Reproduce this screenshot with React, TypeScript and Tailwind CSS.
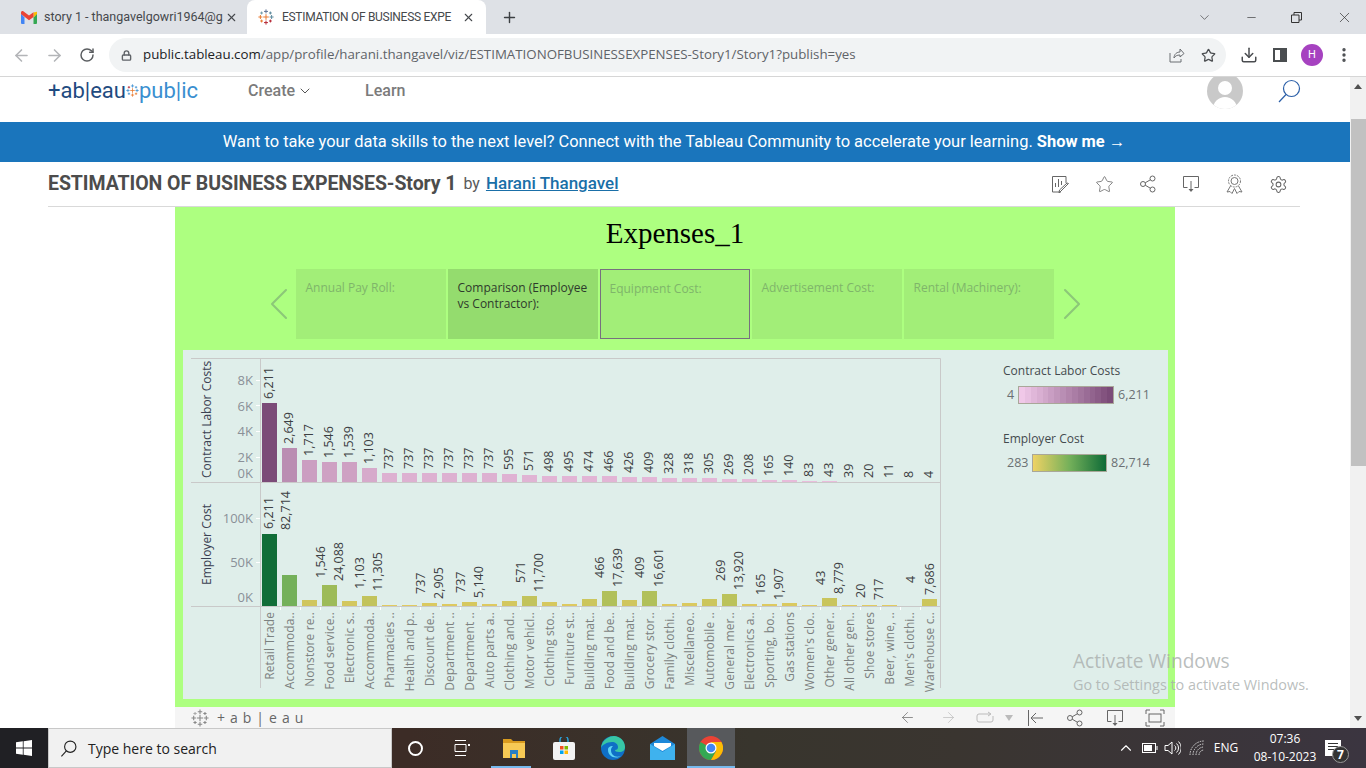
import React from 'react';
import { ArrowLeft, ArrowRight, ChevronDown, ChevronLeft, ChevronRight, ChevronUp, Download, EllipsisVertical, Lock, Minus, Plus, RotateCw, Star, X } from 'lucide-react';

const CATEGORIES = [
  'Retail Trade', 'Accommoda..', 'Nonstore re..', 'Food service..', 'Electronic s..', 'Accommoda..', 'Pharmacies ..', 'Health and p..',
  'Discount de..', 'Department ..', 'Department ..', 'Auto parts a..', 'Clothing and..', 'Motor vehicl..', 'Clothing sto..', 'Furniture st..',
  'Building mat..', 'Food and be..', 'Building mat..', 'Grocery stor..', 'Family clothi..', 'Miscellaneo..', 'Automobile ..', 'General mer..',
  'Electronics a..', 'Sporting, bo..', 'Gas stations', "Women's clo..", 'Other gener..', 'All other gen..', 'Shoe stores', 'Beer, wine, ..',
  "Men's clothi..", 'Warehouse c..',
];

const LABOR = ['6,211', '2,649', '1,717', '1,546', '1,539', '1,103', '737', '737', '737', '737', '737', '737', '595', '571', '498', '495', '474', '466', '426', '409', '328', '318', '305', '269', '208', '165', '140', '83', '43', '39', '20', '11', '8', '4'];
const LABOR_H = [79, 34, 22, 20, 20, 14, 9, 9, 9, 9, 9, 9, 8, 7, 6, 6, 6, 6, 5, 5, 4, 4, 4, 3, 3, 2, 2, 1, 1, 0, 0, 0, 0, 0];
const EMP_H = [72, 31, 6, 21, 5, 10, 1, 1, 3, 2, 4, 2, 5, 10, 4, 2, 7, 15, 6, 15, 2, 3, 7, 12, 2, 2, 3, 1, 8, 1, 1, 1, 0, 7];

const EMP_LABELS: [string, number, number][] = [
  ['6,211', 269, 529], ['82,714', 286, 530], ['1,546', 321, 578], ['24,088', 339, 581], ['1,103', 360, 589], ['11,305', 378, 591],
  ['737', 421, 594], ['2,905', 439, 599], ['737', 461, 593], ['5,140', 479, 598], ['571', 521, 583], ['11,700', 539, 592],
  ['466', 600, 578], ['17,639', 618, 587], ['409', 640, 578], ['16,601', 659, 587], ['269', 721, 581], ['13,920', 739, 590],
  ['165', 761, 595], ['1,907', 779, 600], ['43', 821, 585], ['8,779', 839, 594], ['20', 861, 598], ['717', 879, 600],
  ['4', 911, 583], ['7,686', 930, 595],
];

const STORY = [
  { label: 'Annual Pay Roll:' },
  { label: 'Comparison (Employee vs Contractor):', active: true },
  { label: 'Equipment Cost:', focused: true },
  { label: 'Advertisement Cost:' },
  { label: 'Rental (Machinery):' },
];

type RGB = [number, number, number];

const lerp = (a: RGB, b: RGB, t: number) => {
  const c = a.map((v, i) => Math.round(v + (b[i] - v) * t));
  return `rgb(${c[0]},${c[1]},${c[2]})`;
};

const pink = (h: number) => lerp([234, 190, 221], [123, 75, 120], h / 79);

const EMP_STOPS: [number, RGB][] = [[0, [228, 203, 96]], [21, [157, 187, 88]], [31, [116, 176, 90]], [72, [17, 109, 56]]];

const green = (h: number) => {
  for (let i = 1; i < EMP_STOPS.length; i++) {
    const [h0, c0] = EMP_STOPS[i - 1];
    const [h1, c1] = EMP_STOPS[i];
    if (h <= h1) return lerp(c0, c1, (h - h0) / (h1 - h0));
  }
  return 'rgb(17,109,56)';
};

const PINK_STEPS = Array.from({ length: 16 }, (_, i) => lerp([240, 200, 232], [123, 75, 120], i / 15));

const TableauMark = ({ size = 16, colors }: { size?: number; colors: string[] }) => {
  const cross = (x: number, y: number, r: number, c: string, k: string) => (
    <path key={k} d={`M${x - r} ${y}H${x + r}M${x} ${y - r}V${y + r}`} stroke={c} strokeWidth={1.2} fill="none" />
  );
  return (
    <svg width={size} height={size} viewBox="0 0 20 20">
      {cross(10, 10, 3.5, colors[0], 'c')}
      {cross(10, 3, 2.5, colors[1], 't')}
      {cross(10, 17, 2.5, colors[2], 'b')}
      {cross(3, 10, 2.5, colors[3], 'l')}
      {cross(17, 10, 2.5, colors[4], 'r')}
      {cross(4.5, 5, 1.8, colors[5], 'tl')}
      {cross(15.5, 5, 1.8, colors[4], 'tr')}
      {cross(4.5, 15, 1.8, colors[3], 'bl')}
      {cross(15.5, 15, 1.8, colors[2], 'br')}
    </svg>
  );
};

// magnifier with the lens up and to the right, as Windows and Tableau draw it
const Magnifier = ({ size, color, width }: { size: number; color: string; width: number }) => (
  <svg width={size} height={size} viewBox="0 0 24 24" fill="none" stroke={color} strokeWidth={width}>
    <circle cx="14.500" cy="9.500" r="8" />
    <path d="M9 15.500 2 23" />
  </svg>
);

const Gmail = () => (
  <svg width="16" height="13" viewBox="0 0 16 13">
    <path d="M0 2.500V12a1 1 0 0 0 1 1h2.500V6.500z" fill="#4285f4" />
    <path d="M16 2.500V12a1 1 0 0 1-1 1h-2.500V6.500z" fill="#34a853" />
    <path d="M12.500 1.500 16 0.800V3l-3.500 3.500z" fill="#fbbc04" />
    <path d="M0 3V1.500C0 .3 1.300-.4 2.300.3L8 4.600l4.500-3.300V6L8 9.300 0 3z" fill="#ea4335" />
  </svg>
);

const ChromeIcon = () => (
  <svg width="24" height="24" viewBox="0 0 24 24">
    <circle cx="12" cy="12" r="12" fill="#ea4335" />
    <path d="M12 12 1.600 6A12 12 0 0 0 12 24l5.200-9z" fill="#34a853" />
    <path d="M12 6h10.400A12 12 0 0 1 12 24l5.200-9z" fill="#fbbc04" />
    <circle cx="12" cy="12" r="5.500" fill="#fff" />
    <circle cx="12" cy="12" r="4.300" fill="#4285f4" />
  </svg>
);

const WinLogo = () => (
  <svg width="16" height="16" viewBox="0 0 16 16" fill="#fff">
    <path d="M0 2.300 6.800 1.300V7.600H0zM7.600 1.200 16 0V7.600H7.600zM0 8.400H6.800V14.700L0 13.700zM7.600 8.400H16V16L7.600 14.800z" />
  </svg>
);

const Share3 = ({ size = 18, color = '#666' }: { size?: number; color?: string }) => (
  <svg width={size} height={size} viewBox="0 0 18 18" fill="none" stroke={color} strokeWidth="1">
    <circle cx="4" cy="9" r="2.500" />
    <circle cx="13.500" cy="3.500" r="2.500" />
    <circle cx="13.500" cy="14.500" r="2.500" />
    <path d="M6.200 7.800 11.300 4.800M6.200 10.200l5.100 3" />
  </svg>
);

const DownloadBox = ({ color = '#666' }: { color?: string }) => (
  <svg width="18" height="18" viewBox="0 0 18 18" fill="none" stroke={color} strokeWidth="1">
    <path d="M5.500 12.500H1.500V1.500H16.500V12.500H12.500M9 6V16" />
    <path d="M6.500 14H11.500L9 17z" fill={color} stroke="none" />
  </svg>
);

const Chart = () => (
  <svg width="775" height="349" viewBox="183 350 775 349" className="block shrink-0 font-['Open_Sans',sans-serif]">
    <path d="M191 358.500H940.500V688M191 482.500H940M191 606.500H940M260.500 358V688" fill="none" stroke="#c9c9c9" />

    {/* axis titles */}
    <text transform="translate(211,478) rotate(-90)" fontSize="12" fill="#3b4152">Contract Labor Costs</text>
    <text transform="translate(211,585) rotate(-90)" fontSize="12" fill="#3b4152">Employer Cost</text>

    {/* axis ticks */}
    {[['8K', 380], ['6K', 406], ['4K', 431], ['2K', 457], ['0K', 473], ['100K', 518], ['50K', 562], ['0K', 597]].map(([t, y]) => (
      <text key={`${t}${y}`} x="253" y={Number(y) + 5} textAnchor="end" fontSize="13" fill="#8a9098">{t}</text>
    ))}
    {[380, 405, 431, 457, 518, 562].map(y => <path key={y} d={`M256 ${y + 0.5}H260`} stroke="#fff" />)}

    {CATEGORIES.map((name, i) => {
      const cx = 270 + i * 20;
      const lh = LABOR_H[i];
      const eh = EMP_H[i];
      return (
        <g key={i}>
          <rect x={cx - 8} y={482 - lh} width="15" height={lh} fill={pink(lh)} />
          <rect x={cx - 8} y={606 - eh} width="15" height={eh} fill={green(eh)} />
          <text transform={`translate(${cx + 3},${478 - lh}) rotate(-90)`} fontSize="12.5" fill="#3d4043">{LABOR[i]}</text>
          <text transform={`translate(${cx + 4},612) rotate(-90)`} textAnchor="end" fontSize="12" letterSpacing=".1" fill="#7c8180">{name}</text>
          {i > 0 && <path d={`M${cx - 10 + 0.5} 607V610`} stroke="#fff" />}
        </g>
      );
    })}

    {EMP_LABELS.map(([t, x, y], i) => (
      <text key={i} transform={`translate(${x + 4},${y}) rotate(-90)`} fontSize="12.5" fill="#3d4043">{t}</text>
    ))}
  </svg>
);

const Legend = () => (
  <div className="ml-[45px] pt-[13px] text-[12px] font-['Open_Sans',sans-serif] text-[#555b5f]">
    <div className="text-[#444a4e] leading-[15px]">Contract Labor Costs</div>
    <div className="mt-[8px] flex h-[18px] items-center text-[12.500px] text-[#6b7073]">
      <span className="w-[15px] pl-[4px]">4</span>
      <div className="flex h-[18px] w-[96px] border border-[#a9a799]">
        {PINK_STEPS.map(c => <div key={c} className="flex-1" style={{ backgroundColor: c }} />)}
      </div>
      <span className="ml-[4px]">6,211</span>
    </div>
    <div className="mt-[27px] text-[#444a4e] leading-[15px]">Employer Cost</div>
    <div className="mt-[8px] flex h-[18px] items-center text-[12.500px] text-[#6b7073]">
      <span className="w-[29px] pl-[4px]">283</span>
      <div className="h-[18px] w-[75px] border border-[#a9a799] bg-[linear-gradient(90deg,#eed264,#74b05a_50%,#0e6b37)]" />
      <span className="ml-[4px]">82,714</span>
    </div>
  </div>
);

const Viz = () => (
  <div className="mx-auto w-[1000px] shrink-0">
    <div className="flex h-[500px] flex-col bg-[#adff80]">
      <div className="pt-[8px] text-center font-['Liberation_Serif',serif] text-[29px] leading-[36px] text-black">Expenses_1</div>
      <div className="mt-[18px] flex h-[70px] items-center justify-center gap-[2px]">
        <ChevronLeft size={56} strokeWidth={0.9} className="mr-[-13px] text-[#8cc878]" />
        {STORY.map(s => (
          <div
            key={s.label}
            className={`h-[70px] w-[150px] px-[10px] pt-[11px] font-['Open_Sans',sans-serif] text-[12px] leading-[16px] ${
              s.active ? 'bg-[#94dc6e] text-[#2e3a2c]' : 'bg-[#a2ee78] text-[#7fb56a]'
            } ${s.focused ? 'border border-[#77707f] pt-[10px] pl-[9px]' : ''}`}
          >
            {s.label}
          </div>
        ))}
        <ChevronRight size={56} strokeWidth={0.9} className="ml-[-12px] text-[#8cc878]" />
      </div>
      <div className="mx-[8px] mb-[8px] mr-[7px] mt-[11px] flex h-[349px] bg-[#dfeeea]">
        <Chart />
        <Legend />
      </div>
    </div>
    <div className="flex h-[21px] items-center bg-[#f5f5f5] pl-[16px] text-[#666]">
      <TableauMark size={18} colors={['#888', '#888', '#888', '#888', '#888', '#aaa']} />
      <span className="ml-[8px] font-['Open_Sans',sans-serif] text-[14px] tracking-[5px]">+ab|eau</span>
      <div className="ml-auto flex items-center pr-[10px]">
        <ArrowLeft size={17} strokeWidth={1} className="mr-[24px]" />
        <ArrowRight size={17} strokeWidth={1} className="mr-[19px] text-[#bbb]" />
        <svg width="20" height="14" viewBox="0 0 20 14" fill="none" stroke="#bbb" className="mr-[9px]">
          <path d="M14 3H3a2 2 0 0 0-2 2v4a2 2 0 0 0 2 2h12a2 2 0 0 0 2-2V5M12 1l3 2-3 2" />
        </svg>
        <svg width="8" height="6" viewBox="0 0 8 6" fill="#bbb" className="mr-[14px]"><path d="M0 0h8L4 6z" /></svg>
        <svg width="17" height="18" viewBox="0 0 17 18" fill="none" stroke="#666" className="mr-[22px]"><path d="M1.500 1V17M16 9H4M9 4 4 9l5 5" /></svg>
        <div className="mr-[22px]"><Share3 /></div>
        <div className="mr-[21px]"><DownloadBox /></div>
        <svg width="20" height="18" viewBox="0 0 20 18" fill="none" stroke="#666">
          <path d="M1 5V1H5M15 1H19V5M19 13V17H15M5 17H1V13" />
          <rect x="4" y="5" width="12" height="8" />
        </svg>
      </div>
    </div>
  </div>
);

const Taskbar = () => (
  <div className="flex h-[40px] shrink-0 items-center bg-[linear-gradient(90deg,#3c2c26_30%,#38352d_55%,#3a3530_70%,#3b3540)] text-white">
    <div className="flex h-full w-[48px] items-center justify-center bg-[#202024]"><WinLogo /></div>
    <div className="flex h-full w-[344px] items-center border border-[#c8c8c8] bg-[#f1f1f1] pl-[11px] text-[#222]">
      <Magnifier size={17} color="#222" width={1.6} />
      <span className="ml-[11px] font-['Open_Sans',sans-serif] text-[14px]">Type here to search</span>
    </div>
    <div className="ml-[16px] h-[15px] w-[15px] rounded-full border-[2.500px] border-white" />
    <svg width="16" height="16" viewBox="0 0 16 16" fill="none" stroke="#fff" className="ml-[31px]">
      <path d="M1 .5H12M1 15.500H12M1 4.500H12V11.500H1z" /><rect x="14" y="4" width="2" height="2" fill="#fff" stroke="none" />
    </svg>
    <div className="relative ml-[20px] flex h-full w-[48px] items-center justify-center">
      <svg width="22" height="20" viewBox="0 0 22 20">
        <path d="M0 1h8l2 2h12v3H0z" fill="#d99b1e" /><path d="M0 5h22v15H0z" fill="#f7ca55" /><path d="M7 12h8v8h-2v-4H9v4H7z" fill="#2a7fc4" />
      </svg>
      <div className="absolute bottom-0 left-[1px] h-[2px] w-[40px] bg-[#76b9ed]" />
    </div>
    <div className="ml-[2px] flex h-full w-[48px] items-center justify-center">
      <svg width="22" height="23" viewBox="0 0 22 23">
        <path d="M7 6V3a4 4 0 0 1 8 0v3" fill="none" stroke="#2aa0d8" strokeWidth="1.500" />
        <rect y="5" width="22" height="18" rx="2" fill="#f3f3f3" />
        <path d="M7 9h3.500v3.500H7z" fill="#f25022" /><path d="M11.500 9H15v3.500h-3.500z" fill="#7fba00" /><path d="M7 13.500h3.500V17H7z" fill="#00a4ef" /><path d="M11.500 13.500H15V17h-3.500z" fill="#ffb900" />
      </svg>
    </div>
    <div className="ml-[1px] flex h-full w-[48px] items-center justify-center">
      <svg width="24" height="24" viewBox="0 0 24 24">
        <circle cx="12" cy="12" r="12" fill="#0f6fc6" />
        <path d="M0 12C1 3 9 0 13 0c6 0 11 5 11 11 0 3-2 5-6 5-3 0-4-1-4-2 2 0 3-1 3-3 0-3-3-5-6-5-5 0-10 3-11 6z" fill="#37c6a5" />
        <path d="M7 14c0 5 5 9 11 7l2-1c-6 2-10-1-10-6 0-2 1-3 2-4-3 0-5 1-5 4z" fill="#5fd4f4" />
      </svg>
    </div>
    <div className="ml-[1px] flex h-full w-[48px] items-center justify-center">
      <svg width="25" height="24" viewBox="0 0 25 24">
        <path d="M12.500 0 25 8v16H0V8z" fill="#1e88d8" /><path d="M0 8l12.500 8L25 8v16H0z" fill="#3fb2ee" /><path d="M4 7h17v3l-8.500 5L4 10z" fill="#fff" />
      </svg>
    </div>
    <div className="relative ml-[1px] flex h-full w-[48px] items-center justify-center bg-[#57595c]">
      <ChromeIcon />
      <div className="absolute bottom-0 left-0 h-[2px] w-full bg-[#76b9ed]" />
    </div>
    <div className="ml-auto flex h-full items-center text-[12px] font-['Open_Sans',sans-serif]">
      <ChevronUp size={18} strokeWidth={1.5} />
      <svg width="16" height="10" viewBox="0 0 16 10" fill="none" stroke="#fff" className="ml-[7px]"><rect x=".5" y=".5" width="13" height="9" /><rect x="2" y="2" width="8" height="6" fill="#fff" stroke="none" /><path d="M15 3v4" /></svg>
      <svg width="17" height="16" viewBox="0 0 17 16" fill="none" stroke="#fff" className="ml-[6px]"><path d="M1 5.500H4L8 2V14L4 10.500H1zM10.500 5.500a3 3 0 0 1 0 5M12.500 3.500a6 6 0 0 1 0 9M14.500 1.500a9 9 0 0 1 0 13" /></svg>
      <svg width="16" height="16" viewBox="0 0 16 16" fill="none" stroke="#ddd" className="ml-[8px]"><path d="M1 15A14 14 0 0 1 15 1M4 15A11 11 0 0 1 15 4M7 15a8 8 0 0 1 8-8M10 15a5 5 0 0 1 5-5" strokeDasharray="1.500 1" /></svg>
      <span className="ml-[2px] w-[38px] text-center">ENG</span>
      <div className="ml-[8px] w-[64px] text-center leading-[18px]"><div>07:36</div><div>08-10-2023</div></div>
      <div className="relative ml-[8px] mr-[25px] h-[16px] w-[16px] bg-white">
        <div className="mx-[3px] mt-[3px] h-[1px] bg-[#333]" />
        <div className="mx-[3px] mt-[2px] h-[1px] bg-[#333]" />
        <div className="mx-[3px] mt-[2px] h-[1px] bg-[#333]" />
        <div className="absolute left-[7px] top-[6px] flex h-[17px] w-[17px] items-center justify-center rounded-full border border-[#999] bg-[#333] font-bold">7</div>
      </div>
    </div>
  </div>
);

const App: React.FC = () => {
  return (
    <div className="relative flex h-[768px] w-[1366px] flex-col overflow-hidden bg-white font-['Roboto',sans-serif]">
      {/* Tabs */}
      <div className="flex h-[34px] shrink-0 items-end bg-[#dee1e6] text-[12.500px] text-[#45484c]">
        <div className="flex h-[34px] w-[247px] items-center pl-[21px]">
          <Gmail />
          <span className="ml-[7px] w-[172px] whitespace-nowrap">story 1 - thangavelgowri1964@g</span>
          <X size={13} strokeWidth={2} className="ml-[9px]" />
        </div>
        <div className="flex h-[34px] w-[239px] items-center rounded-t-[8px] bg-white pl-[11px]">
          <TableauMark size={16} colors={['#e8762b', '#5b6f91', '#b3202e', '#e8762b', '#59879b', '#7099a6']} />
          <span className="ml-[8px] w-[170px] whitespace-nowrap text-[12px] tracking-[-.3px]">ESTIMATION OF BUSINESS EXPE</span>
          <X size={13} strokeWidth={2} className="ml-[10px]" />
        </div>
        <div className="flex h-[34px] items-center pl-[15px] text-[#3c4043]"><Plus size={17} strokeWidth={2} /></div>
        <div className="ml-auto flex h-[34px] items-center text-[#333]">
          <ChevronDown size={15} strokeWidth={1} className="mr-[33px]" />
          <Minus size={13} strokeWidth={1.2} className="mr-[33px]" />
          <svg width="11" height="11" viewBox="0 0 11 11" fill="none" stroke="#333" className="mr-[34px]"><path d="M.5 3h7.500v7.500H.500zM3 3V.5h7.500V8H8" /></svg>
          <X size={17} strokeWidth={1} className="mr-[13px]" />
        </div>
      </div>

      {/* Address bar */}
      <div className="flex h-[43px] shrink-0 items-center border-b border-[#d6d6d6] bg-white">
        <ArrowLeft size={19} strokeWidth={2} className="ml-[12px] text-[#b3b5b8]" />
        <ArrowRight size={19} strokeWidth={2} className="ml-[14px] text-[#b3b5b8]" />
        <RotateCw size={16} strokeWidth={2.200} className="ml-[15px] text-[#5a5d60]" />
        <div className="ml-[14px] flex h-[34px] w-[1117px] items-center rounded-full bg-[#f1f3f4] pl-[12px] font-['Open_Sans',sans-serif] text-[13.300px]">
          <Lock size={11} strokeWidth={3} className="text-[#5f6368]" />
          <span className="ml-[11px] text-[#202124]">public.tableau.com</span>
          <span className="text-[#5f6368]">/app/profile/harani.thangavel/viz/ESTIMATIONOFBUSINESSEXPENSES-Story1/Story1?publish=yes</span>
          <div className="ml-auto flex items-center pr-[10px] text-[#5f6368]">
            <svg width="16" height="16" viewBox="0 0 16 16" fill="none" stroke="#6b6e72" className="mr-[16px]"><path d="M1 6v9h11v-3M5 11c0-4 3-6 6-6V2l4 4.500L11 10V8c-3 0-5 1-6 3z" /></svg>
            <Star size={15} strokeWidth={2} className="text-[#4a4d50]" />
          </div>
        </div>
        <Download size={18} strokeWidth={2} className="ml-[14px] text-[#4a4d50]" />
        <div className="ml-[15px] flex h-[14px] w-[14px] border-2 border-[#4a4d50]"><div className="ml-auto w-[5px] bg-[#4a4d50]" /></div>
        <div className="ml-[14px] flex h-[22px] w-[22px] items-center justify-center rounded-full bg-[#a642c0] text-[11px] text-white">H</div>
        <EllipsisVertical size={18} strokeWidth={2.500} className="ml-[12px] text-[#4a4d50]" />
      </div>

      {/* Page */}
      <div className="flex min-h-0 flex-1">
        <div className="flex w-[1350px] flex-col overflow-hidden">
          <div className="flex h-[45px] shrink-0 items-center pb-[18px] pl-[48px]">
            <span className="flex w-[200px] items-center text-[22px] font-normal leading-none text-[#1f4b80]">
              +ab|eau
              <TableauMark size={13} colors={['#e8762b', '#3a8fd0', '#e8762b', '#3a8fd0', '#3a8fd0', '#b3202e']} />
              <span className="text-[#3a8fd0]">pub|ic</span>
            </span>
            <span className="flex items-center text-[16px] font-medium text-[#7b7b7b]">Create<ChevronDown size={16} strokeWidth={1.500} className="ml-[2px] text-[#555]" /></span>
            <span className="ml-[52px] text-[16px] font-medium text-[#7b7b7b]">Learn</span>
            <div className="relative ml-auto mr-[34px] flex h-[36px] w-[36px] shrink-0 items-center justify-center overflow-hidden rounded-full bg-[#c9c9c9]">
              <div className="absolute left-[11px] top-[8px] h-[14px] w-[14px] rounded-full bg-white" />
              <div className="absolute left-[6px] top-[24px] h-[14px] w-[24px] rounded-t-full bg-white" />
            </div>
            <div className="mr-[49px]"><Magnifier size={24} color="#2b5fa8" width={1.200} /></div>
          </div>

          <div className="flex h-[40px] shrink-0 items-center justify-center bg-[#1a75bc] pr-[2px] text-[16.450px] text-white">
            <span>Want to take your data skills to the next level? Connect with the Tableau Community to accelerate your learning. <b className="font-bold">Show me</b> →</span>
          </div>

          <div className="mx-[48px] mr-[50px] flex h-[45px] shrink-0 items-center border-b border-[#d9d9d9] text-[#4c4c4c]">
            <span className="text-[19.500px] font-bold tracking-[-.07px]">ESTIMATION OF BUSINESS EXPENSES-Story 1</span>
            <span className="ml-[7px] text-[16px] text-[#5a5a5a]">by</span>
            <span className="ml-[6px] text-[17px] font-medium text-[#1a6fa8] underline">Harani Thangavel</span>
            <div className="ml-auto flex items-center gap-[25px] pr-[12px]">
              <svg width="19" height="19" viewBox="0 0 19 19" fill="none" stroke="#666"><path d="M10 17H1.500V1.500H15V8M4.500 12V8M7.500 12V4M10.500 10V6M17.500 8.500 10 16l-2 2 .5-3L16 8z" /></svg>
              <Star size={19} strokeWidth={1} className="text-[#666]" />
              <Share3 />
              <DownloadBox />
              <svg width="19" height="20" viewBox="0 0 19 20" fill="none" stroke="#777"><circle cx="9.500" cy="7" r="6" strokeDasharray="2 1" /><circle cx="9.500" cy="7" r="3.500" /><path d="M5.500 12 2 18l3-.5 2 2 2.500-5 2.500 5 2-2 3 .5-3.500-6" /></svg>
              <svg width="19" height="19" viewBox="0 0 24 24" fill="none" stroke="#666" strokeWidth="1.300"><path d="M12.220 2h-.44a2 2 0 0 0-2 2v.18a2 2 0 0 1-1 1.730l-.43.250a2 2 0 0 1-2 0l-.15-.080a2 2 0 0 0-2.730.730l-.220.380a2 2 0 0 0 .730 2.730l.150.100a2 2 0 0 1 1 1.720v.510a2 2 0 0 1-1 1.740l-.150.090a2 2 0 0 0-.730 2.730l.220.380a2 2 0 0 0 2.730.730l.150-.080a2 2 0 0 1 2 0l.430.250a2 2 0 0 1 1 1.730V20a2 2 0 0 0 2 2h.44a2 2 0 0 0 2-2v-.18a2 2 0 0 1 1-1.730l.430-.250a2 2 0 0 1 2 0l.150.080a2 2 0 0 0 2.730-.730l.220-.390a2 2 0 0 0-.730-2.730l-.150-.080a2 2 0 0 1-1-1.740v-.5a2 2 0 0 1 1-1.740l.150-.090a2 2 0 0 0 .730-2.730l-.220-.380a2 2 0 0 0-2.730-.730l-.150.080a2 2 0 0 1-2 0l-.430-.250a2 2 0 0 1-1-1.730V4a2 2 0 0 0-2-2z" /><circle cx="12" cy="12" r="3" /></svg>
            </div>
          </div>

          <Viz />
        </div>

        {/* Scrollbar */}
        <div className="flex w-[16px] flex-col items-center bg-[#f1f1f1]">
          <div className="flex h-[42px] items-start justify-center pt-[7px]"><div className="h-0 w-0 border-x-[4px] border-b-[5px] border-x-transparent border-b-[#505050]" /></div>
          <div className="ml-[1px] h-[347px] w-[15px] bg-[#c1c1c1]" />
          <div className="mt-auto mb-[7px] h-0 w-0 border-x-[4px] border-t-[5px] border-x-transparent border-t-[#505050]" />
        </div>
      </div>

      <Taskbar />

      {/* Windows watermark */}
      <div className="pointer-events-none absolute left-[1073px] top-[649px] font-['Open_Sans',sans-serif] text-[#a8adac]/80">
        <div className="text-[19.100px] leading-[25px]">Activate Windows</div>
        <div className="text-[14.400px] leading-[20px] mt-[1px]">Go to Settings to activate Windows.</div>
      </div>
    </div>
  );
};

export default App;
